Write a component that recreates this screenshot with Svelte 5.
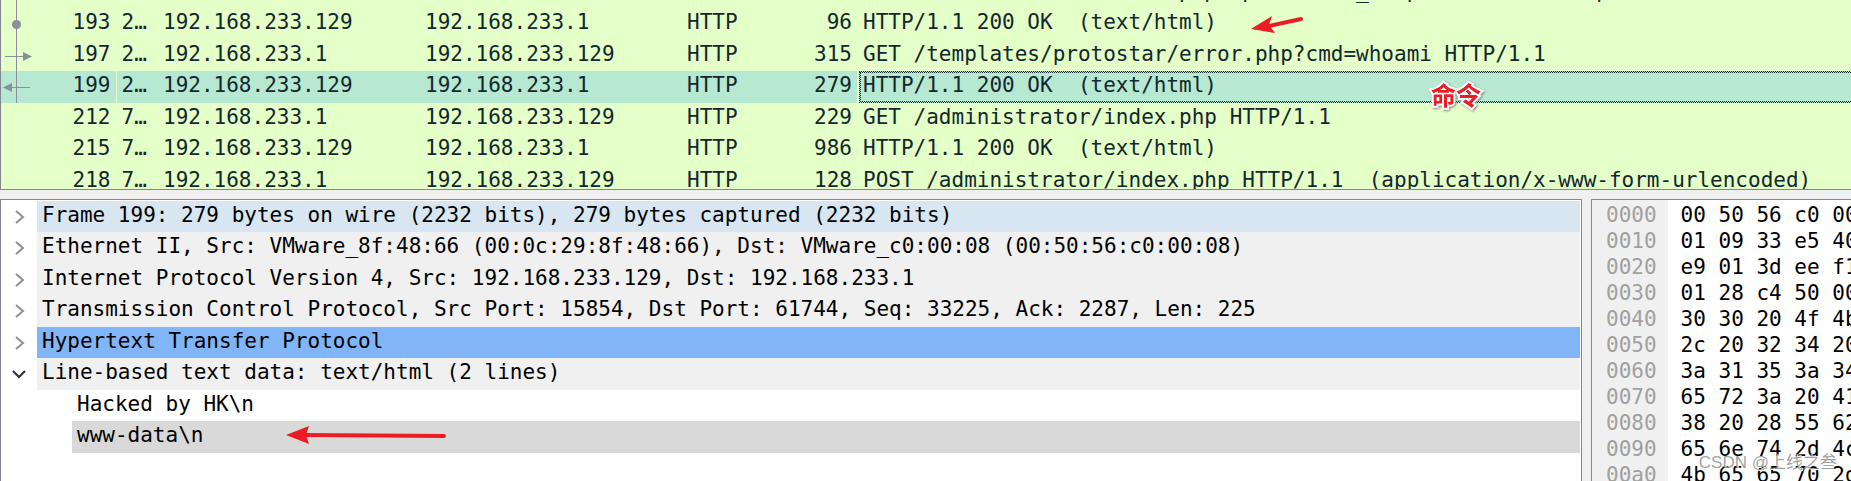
<script lang="ts">
    type Packet = {
        no: string;
        time: string;
        src: string;
        dst: string;
        proto: string;
        len: string;
        info: string;
        mark?: "top" | "dot" | "request" | "response";
    };

    // The first row is scrolled almost out of view, only its descenders show.
    const packets: Packet[] = [
        { no: "", time: "", src: "", dst: "", proto: "", len: "", info: "                         p p  p        _   p              p", mark: "top" },
        { no: "193", time: "2…", src: "192.168.233.129", dst: "192.168.233.1", proto: "HTTP", len: "96", info: "HTTP/1.1 200 OK  (text/html)", mark: "dot" },
        { no: "197", time: "2…", src: "192.168.233.1", dst: "192.168.233.129", proto: "HTTP", len: "315", info: "GET /templates/protostar/error.php?cmd=whoami HTTP/1.1", mark: "request" },
        { no: "199", time: "2…", src: "192.168.233.129", dst: "192.168.233.1", proto: "HTTP", len: "279", info: "HTTP/1.1 200 OK  (text/html)", mark: "response" },
        { no: "212", time: "7…", src: "192.168.233.1", dst: "192.168.233.129", proto: "HTTP", len: "229", info: "GET /administrator/index.php HTTP/1.1" },
        { no: "215", time: "7…", src: "192.168.233.129", dst: "192.168.233.1", proto: "HTTP", len: "986", info: "HTTP/1.1 200 OK  (text/html)" },
        { no: "218", time: "7…", src: "192.168.233.1", dst: "192.168.233.129", proto: "HTTP", len: "128", info: "POST /administrator/index.php HTTP/1.1  (application/x-www-form-urlencoded)" },
    ];

    const layers = [
        { text: "Frame 199: 279 bytes on wire (2232 bits), 279 bytes captured (2232 bits)", tone: "frame" },
        { text: "Ethernet II, Src: VMware_8f:48:66 (00:0c:29:8f:48:66), Dst: VMware_c0:00:08 (00:50:56:c0:00:08)" },
        { text: "Internet Protocol Version 4, Src: 192.168.233.129, Dst: 192.168.233.1" },
        { text: "Transmission Control Protocol, Src Port: 15854, Dst Port: 61744, Seq: 33225, Ack: 2287, Len: 225" },
        { text: "Hypertext Transfer Protocol", tone: "http" },
        { text: "Line-based text data: text/html (2 lines)", open: true },
        { text: "Hacked by HK\\n", leaf: true },
        { text: "www-data\\n", leaf: true, tone: "current" },
    ];

    const dump = [
        ["0000", "00 50 56 c0 00"],
        ["0010", "01 09 33 e5 40"],
        ["0020", "e9 01 3d ee f1"],
        ["0030", "01 28 c4 50 00"],
        ["0040", "30 30 20 4f 4b"],
        ["0050", "2c 20 32 34 20"],
        ["0060", "3a 31 35 3a 34"],
        ["0070", "65 72 3a 20 41"],
        ["0080", "38 20 28 55 62"],
        ["0090", "65 6e 74 2d 4c"],
        ["00a0", "4b 65 65 70 2d"],
    ];

    let selected = $state("199");
</script>

<div class="window">
    <section class="packets">
        <table>
            <colgroup>
                <col class="c-mark"><col class="c-no"><col class="c-time"><col class="c-addr"><col class="c-addr">
                <col class="c-proto"><col class="c-len"><col>
            </colgroup>
            <tbody>
                {#each packets as p}
                    <tr class:selected={p.no === selected} onclick={() => (selected = p.no)}>
                        <td class="mark">
                            {#if p.mark}
                                <svg width="32" height="31" viewBox="0 0 32 31">
                                    <path d="M15.5 0V32" />
                                    {#if p.mark === "dot"}
                                        <circle cx="15.5" cy="16.5" r="4.5" />
                                    {:else if p.mark === "request"}
                                        <path d="M4 16.5H23" /><polygon points="22,12 31,16.5 22,21" />
                                    {:else if p.mark === "response"}
                                        <path d="M10 16.5H29" /><polygon points="11,12 2,16.5 11,21" />
                                    {/if}
                                </svg>
                            {/if}
                        </td>
                        <td class="num">{p.no}</td>
                        <td class="time">{p.time}</td>
                        <td>{p.src}</td>
                        <td>{p.dst}</td>
                        <td>{p.proto}</td>
                        <td class="num">{p.len}</td>
                        <td class="info"><div>{p.info}</div></td>
                    </tr>
                {/each}
            </tbody>
        </table>

        <svg class="arrow arrow-top" width="54" height="20" viewBox="0 0 54 20">
            <path d="M18 10L50 3" /><polygon points="0,13 21,0 18,9 24,17" />
        </svg>
        <span class="note">命令</span>
    </section>

    <div class="lower">
        <section class="details">
            <ul>
                {#each layers as l}
                    <li class={l.tone} class:leaf={l.leaf}>
                        {#if !l.leaf}
                            <button type="button" class:open={l.open} aria-label="Toggle layer">
                                <svg width="16" height="16" viewBox="0 0 16 16">
                                    <path d={l.open ? "M2 5L8 11L14 5" : "M5 2L12 8L5 14"} />
                                </svg>
                            </button>
                        {/if}
                        <span>{l.text}</span>
                    </li>
                {/each}
            </ul>
            <svg class="arrow arrow-data" width="162" height="20" viewBox="0 0 162 20">
                <path d="M18 9L158 10" /><polygon points="0,9 23,0 20,9 23,18" />
            </svg>
        </section>

        <section class="bytes">
            <table>
                <tbody>
                    {#each dump as [offset, hex]}
                        <tr><th>{offset}</th><td>{hex}</td></tr>
                    {/each}
                </tbody>
            </table>
        </section>
    </div>

    <span class="watermark">CSDN @上线之叁</span>
</div>

<style>
    :global(body) {
        margin: 0;
    }

    .window {
        position: relative;
        display: flex;
        flex-direction: column;
        gap: 9px;
        height: 100vh;
        overflow: hidden;
        background: #f0f0f0;
        color: #000;
        font: 21px/32px Consolas, "DejaVu Sans Mono", "Noto Sans CJK SC", monospace;
        white-space: pre;
    }

    section {
        position: relative;
        box-sizing: border-box;
        overflow: hidden;
        border: 1px solid #828790;
    }

    table {
        border-collapse: collapse;
    }

    td,
    th {
        padding: 0;
        font-weight: normal;
        text-align: left;
    }

    .packets {
        flex: 0 0 190px;
        border-width: 0 0 1px 1px;
        background: #e4ffc7;
        color: #12272e;
    }

    .packets table {
        width: 100%;
        margin-top: -23px;
        table-layout: fixed;
    }

    .packets tr {
        height: 31px;
    }

    .packets tr:nth-child(even) {
        height: 32px;
    }

    .packets td {
        padding-left: 5px;
        line-height: 28px;
        vertical-align: top;
    }

    .c-mark { width: 33px; }
    .c-no { width: 82px; }
    .c-time { width: 42px; }
    .c-addr { width: 262px; }
    .c-proto { width: 100px; }
    .c-len { width: 75px; }

    .packets .mark {
        padding: 0;
    }

    .mark svg {
        display: block;
        overflow: visible;
        fill: #8a9099;
        stroke: #8a9099;
    }

    .mark circle,
    .mark polygon {
        stroke: none;
    }

    .packets .num {
        padding-right: 5px;
        text-align: right;
    }

    .selected td {
        background: #b7e8d2;
    }

    .packets .time {
        border-left: 1px solid #e4ffc7;
    }

    .packets .info {
        padding: 0 0 0 2px;
        background: #e4ffc7;
    }

    .info div {
        box-sizing: border-box;
        height: 31px;
        margin-right: -3px;
        padding-left: 3px;
        border: 1px solid transparent;
        line-height: 26px;
    }

    .selected .info div {
        height: 32px;
        border: 1px dotted #12272e;
        outline: 1px dotted #12272e;
        outline-offset: -2px;
        background: #b7e8d2;
    }

    .lower {
        display: grid;
        flex: 1;
        grid-template-columns: 1fr 260px;
        gap: 9px;
        min-height: 0;
    }

    .lower section {
        border-bottom: 0;
        background: #fff;
    }

    ul {
        margin: 0;
        padding: 1px 1px 0 0;
        list-style: none;
    }

    li {
        display: flex;
        height: 31px;
        line-height: 29px;
    }

    li:nth-child(even) {
        height: 32px;
    }

    li button {
        display: grid;
        flex: 0 0 36px;
        place-items: center;
        padding: 0;
        border: 0;
        background: none;
    }

    li button svg {
        fill: none;
        stroke: #909090;
        stroke-width: 2;
    }

    li button.open svg {
        stroke: #303030;
    }

    li span {
        flex: 1;
        padding-left: 5px;
        background: #f0f0f0;
    }

    li.leaf {
        padding-left: 71px;
    }

    li.leaf span {
        padding-left: 5px;
        background: #fff;
    }

    li.frame span {
        background: #d8e6f2;
    }

    li.http span {
        background: #80b5f7;
    }

    li.current span {
        background: #d9d9d9;
    }

    .lower .bytes {
        border-right: 0;
        background: linear-gradient(to right, #f0f0f0 76px, #fff 76px);
    }

    .bytes table {
        width: max-content;
        margin-top: 2px;
    }

    .bytes tr {
        line-height: 26px;
    }

    .bytes th {
        padding: 0 12px 0 14px;
        color: #a0a0a0;
    }

    .bytes td {
        padding-left: 12px;
    }

    .arrow {
        position: absolute;
        fill: #ed1c24;
        stroke: #ed1c24;
        stroke-width: 4;
        stroke-linecap: round;
    }

    .arrow polygon {
        stroke: none;
    }

    .arrow-top {
        top: 16px;
        left: 1250px;
    }

    .arrow-data {
        top: 226px;
        left: 285px;
    }

    .note {
        position: absolute;
        top: 78px;
        left: 1430px;
        color: #ed1c24;
        font: bold 25px/32px "Noto Sans CJK SC", sans-serif;
        paint-order: stroke fill;
        -webkit-text-stroke: 4px #fff;
        filter: drop-shadow(1px 1px 1px #888);
    }

    .watermark {
        position: absolute;
        right: 14px;
        bottom: 4px;
        color: rgba(130, 130, 130, .75);
        font: 17px/28px "Liberation Sans", "Noto Sans CJK SC", sans-serif;
        text-shadow: 1px 1px 0 #fff;
    }
</style>
